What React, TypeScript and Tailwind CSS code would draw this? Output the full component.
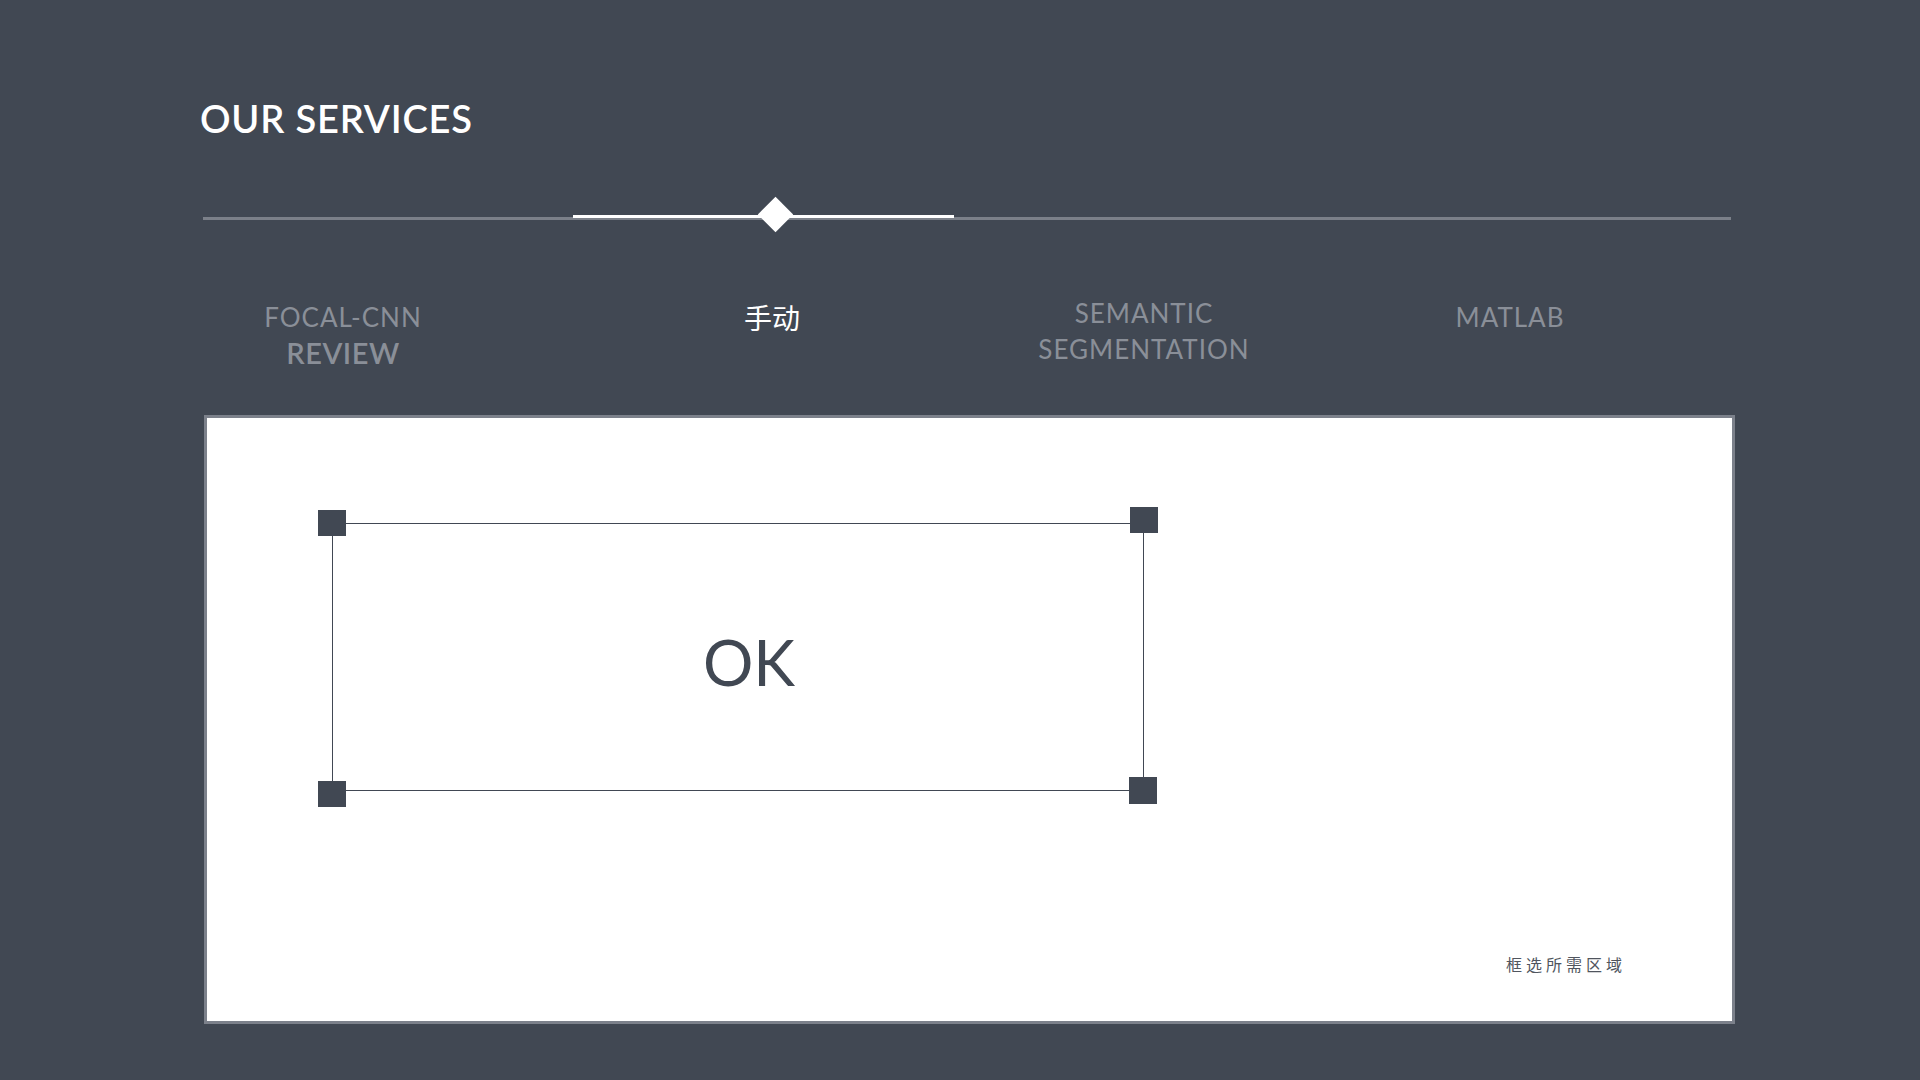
export default function App() {
  const tabText = "text-[26px] leading-[36px] tracking-[1px] text-[#8a8f98]";

  return (
    <div className="flex h-[1080px] w-[1920px] flex-col bg-[#414853] font-['Lato','Noto_Sans_CJK_SC',sans-serif]">
      {/* heading */}
      <h1 className="ml-[200px] mt-[99px] text-[38px] font-semibold leading-[38px] tracking-[0.8px] text-white">
        OUR SERVICES
      </h1>

      {/* progress line */}
      <div className="relative ml-[203px] mt-[59px] h-[36px] w-[1528px]">
        <div className="mt-[21px] h-[3px] w-full bg-[#7b8089]" />
        <div className="absolute left-[370px] top-[19px] h-[3px] w-[381px] bg-white" />
        <div className="absolute left-[560px] top-[6px] h-[25px] w-[25px] rotate-45 bg-white" />
      </div>

      {/* tabs */}
      <div className="ml-[223px] mt-[63px] flex h-[80px] items-start">
        <div className="mt-[4px] flex w-[240px] flex-col items-center">
          <span className={`${tabText} leading-[33px]`}>FOCAL-CNN</span>
          <span className="text-[29px] font-semibold leading-[36px] tracking-[0.5px] text-[#8a8f98]">
            REVIEW
          </span>
        </div>
        <div className="ml-[189px] mt-[4px] flex w-[240px] justify-center">
          <span className="font-['Noto_Sans_CJK_SC',sans-serif] text-[28px] leading-[36px] text-white">
            手动
          </span>
        </div>
        <div className="ml-[132px] flex w-[240px] flex-col items-center">
          <span className={tabText}>SEMANTIC</span>
          <span className={tabText}>SEGMENTATION</span>
        </div>
        <div className="ml-[126px] mt-[4px] flex w-[240px] justify-center">
          <span className={tabText}>MATLAB</span>
        </div>
      </div>

      {/* canvas panel */}
      <div className="relative ml-[204px] mt-[40px] h-[609px] w-[1531px] border-[3px] border-[#7c818b] bg-white">
        <div className="absolute left-[125px] top-[105px] flex h-[268px] w-[812px] items-center justify-center border border-[#414853] pl-[22px] pt-[9px]">
          <span className="text-[63px] leading-[64px] text-[#414853]">OK</span>
        </div>
        <div className="absolute left-[111px] top-[92px] h-[26px] w-[28px] bg-[#414853]" />
        <div className="absolute left-[923px] top-[89px] h-[26px] w-[28px] bg-[#414853]" />
        <div className="absolute left-[111px] top-[363px] h-[26px] w-[28px] bg-[#414853]" />
        <div className="absolute left-[922px] top-[359px] h-[27px] w-[28px] bg-[#414853]" />

        <span className="absolute left-[1299px] top-[537px] font-['Noto_Sans_CJK_SC',sans-serif] text-[16px] leading-[18px] tracking-[4px] text-[#50555e]">
          框选所需区域
        </span>
      </div>
    </div>
  );
}
